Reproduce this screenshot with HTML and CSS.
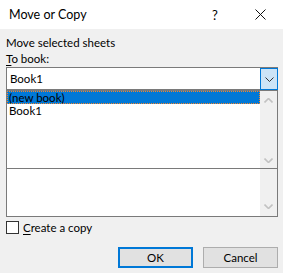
FILE: index.html
```html
<!DOCTYPE html>
<html lang="en">
<head>
  <meta charset="UTF-8">
  <title>Move or Copy</title>
  <link rel="stylesheet" href="styles.css">
</head>
<body>

  <div class="dialog">
    <div class="titlebar">
      <span class="title">Move or Copy</span>
      <span class="help">?</span>
      <span class="close">
        <svg width="11" height="11" viewBox="0 0 11 11"><path d="M0.5 0.5 L10.5 10.5 M10.5 0.5 L0.5 10.5" stroke="#111" stroke-width="1" fill="none"/></svg>
      </span>
    </div>

    <div class="content">
      <div class="label first">Move selected sheets</div>
      <div class="label"><u>T</u>o book:</div>

      <div class="combo">
        <span class="combo-text">Book1</span>
        <span class="combo-button">
          <svg width="9" height="5" viewBox="0 0 9 5"><path d="M0.5 0.5 L4.5 4.5 L8.5 0.5" stroke="#333" stroke-width="1" fill="none"/></svg>
        </span>
      </div>

      <div class="listbox">
        <div class="list-section top">
          <div class="items">
            <div class="item selected">(new book)</div>
            <div class="item">Book1</div>
          </div>
          <div class="scrollbar">
            <svg width="9" height="5" viewBox="0 0 9 5"><path d="M0.5 4.5 L4.5 0.5 L8.5 4.5" stroke="#c2c2c2" stroke-width="1.6" fill="none"/></svg>
            <svg width="9" height="5" viewBox="0 0 9 5"><path d="M0.5 0.5 L4.5 4.5 L8.5 0.5" stroke="#c2c2c2" stroke-width="1.6" fill="none"/></svg>
          </div>
        </div>
        <div class="list-section bottom">
          <div class="items"></div>
          <div class="scrollbar end">
            <svg width="9" height="5" viewBox="0 0 9 5"><path d="M0.5 0.5 L4.5 4.5 L8.5 0.5" stroke="#c2c2c2" stroke-width="1.6" fill="none"/></svg>
          </div>
        </div>
      </div>

      <label class="check-row">
        <span class="checkbox"></span>
        <span><u>C</u>reate a copy</span>
      </label>

      <div class="buttons">
        <button class="button default">OK</button>
        <button class="button">Cancel</button>
      </div>
    </div>
  </div>

</body>
</html>
```

FILE: styles.css
```css
body {
  margin: 0;
  font-family: Lato, 'Noto Sans', sans-serif;
  font-size: 11.5px;
  color: #000;
  background: #F0F0F0;
}
.dialog {
  width: 283px;
  height: 273px;
  overflow: hidden;
}
.titlebar {
  height: 29px;
  background: #fff;
  display: flex;
  align-items: center;
  font-size: 12.5px;
}
.title {
  padding-left: 9px;
  flex: 1;
}
.help {
  width: 12px;
  margin-right: 31px;
  font-size: 13px;
}
.close {
  width: 11px;
  height: 11px;
  margin-right: 17px;
  display: flex;
}
.content {
  padding: 0 5px 0 6px;
}
.label {
  line-height: 16px;
}
.label.first {
  margin-top: 6px;
}
u {
  text-decoration-thickness: 1px;
  text-underline-offset: 2px;
}
.combo {
  height: 23px;
  box-sizing: border-box;
  border: 1px solid #7A7A7A;
  background: #fff;
  display: flex;
  align-items: stretch;
}
.combo-text {
  flex: 1;
  padding-left: 3px;
  line-height: 21px;
}
.combo-button {
  width: 18px;
  box-sizing: border-box;
  border: 1px solid #0078D7;
  background: #CCE4F7;
  margin: 0 -1px -1px 0;
  display: flex;
  align-items: center;
  justify-content: center;
}
.listbox {
  height: 127px;
  box-sizing: border-box;
  border: 1px solid #7A7A7A;
  background: #fff;
}
.list-section {
  display: flex;
}
.list-section.top {
  height: 78px;
  border-bottom: 1px solid #7A7A7A;
  box-sizing: border-box;
}
.list-section.bottom {
  height: 47px;
}
.items {
  flex: 1;
}
.item {
  height: 13px;
  line-height: 13px;
  padding-left: 2px;
  overflow: hidden;
}
.item.selected {
  background: #0078D7;
  outline: 1px dotted #F7862A;
  outline-offset: -1px;
}
.scrollbar {
  width: 17px;
  background: #F0F0F0;
  display: flex;
  flex-direction: column;
  justify-content: space-between;
  align-items: center;
  padding: 7px 0 5px;
  box-sizing: border-box;
}
.scrollbar.end {
  justify-content: flex-end;
  padding-bottom: 7px;
}
.check-row {
  margin-top: 4px;
  display: flex;
  align-items: center;
  gap: 4px;
  line-height: 13px;
}
.checkbox {
  width: 13px;
  height: 13px;
  box-sizing: border-box;
  border: 1px solid #333;
  background: #fff;
}
.buttons {
  margin-top: 13px;
  display: flex;
  justify-content: flex-end;
  gap: 10px;
}
.button {
  width: 75px;
  height: 21px;
  box-sizing: border-box;
  background: #E1E1E1;
  border: 1px solid #ADADAD;
  font-family: inherit;
  font-size: 11.5px;
  padding: 0;
  color: #000;
}
.button.default {
  border: 2px solid #0078D7;
}
```
